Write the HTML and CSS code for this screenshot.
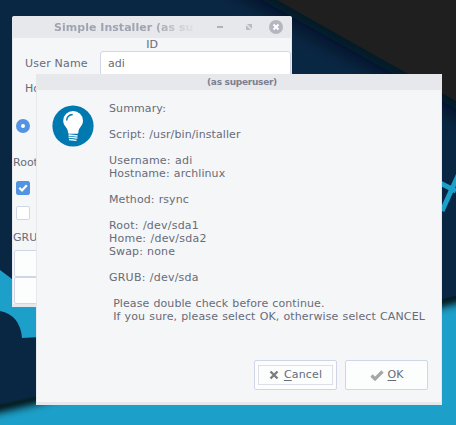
FILE: index.html
```html
<!DOCTYPE html>
<html lang="en">
<head>
<meta charset="utf-8">
<title>Simple Installer</title>
<link rel="stylesheet" href="styles.css">
</head>
<body>
<svg class="wallpaper" viewBox="0 0 456 425" aria-hidden="true">
  <defs>
    <filter id="soft" filterUnits="userSpaceOnUse" x="150" y="-80" width="400" height="300"><feGaussianBlur stdDeviation="10"/></filter>
    <filter id="soft2" filterUnits="userSpaceOnUse" x="-60" y="240" width="600" height="240"><feGaussianBlur stdDeviation="4"/></filter>
  </defs>
  <rect width="456" height="425" fill="#092643"/>
  <path d="M223-30 483 116" stroke="#000b16" stroke-width="16" filter="url(#soft)"/>
  <path d="M277 0H456V101Z" fill="#1f1f1f"/>
  <path d="M0 270 12 279 60 315V389L442 300 456 296V425H0Z" fill="#1c9fc8"/>
  <path d="M-30 413 36 398 60 391 442 301 490 288" stroke="#000" stroke-width="11" fill="none" filter="url(#soft2)"/>
  <path d="M0 311Q20 315 22 338L60 336V390L36 396 0 404Z" fill="#092643"/>
  <path d="M430 260H456V296L430 303Z" fill="#092643"/>
  <path d="M436 181 456 191M442 211 461 169" stroke="#1c9fc8" stroke-width="5" fill="none"/>
</svg>
<main class="window">
  <header class="titlebar">
    <span class="title">Simple Installer (as su</span>
    <svg class="controls" viewBox="0 0 76 22" aria-hidden="true">
      <path d="M5 11h6" stroke="#b0b3bc" stroke-width="2"/>
      <path d="M35 8h5v5zM34 9v5h5z" fill="#b8bbc3"/>
      <circle cx="64" cy="11" r="7" fill="#b4b7c0"/>
      <path d="m61.500 8.500 5 5m0-5-5 5" stroke="#fff" stroke-width="2"/>
    </svg>
  </header>
  <div class="id">ID</div>
  <div class="field"><label>User Name</label><span class="input">adi</span></div>
  <div class="host">Hostname</div>
  <span class="radio"></span>
  <div class="root">Root</div>
  <svg class="check on" viewBox="0 0 14 14"><rect width="14" height="14" rx="1.500" fill="#5294e2"/><path d="m3.300 6.800 2.700 2.700 4.800-5.200" fill="none" stroke="#fff" stroke-width="2.200"/></svg>
  <span class="check"></span>
  <div class="grub">GRUB</div>
  <div class="box"></div><div class="box"></div>
</main>
<section class="dialog">
  <header>(as superuser)</header>
  <div class="content">
    <svg class="bulb" viewBox="0 0 42 42" aria-hidden="true">
      <circle cx="21" cy="21" r="20.600" fill="#0079b0"/>
      <path d="M16 27.500C16 22.500 11.200 21 11.200 15.700a9.900 9.700 0 0 1 19.800 0c0 5.300-4.600 6.800-4.600 11.800q0 1.300-1.400 1.300h-7.600q-1.400 0-1.400-1.300z" fill="#fff"/>
      <path d="M14.700 15.500c.2-3.500 2.500-5.600 6-5.900" fill="none" stroke="#0079b0" stroke-width="1.500"/>
      <path d="m16.500 30 9 1m-9 1.200 9 1m-8.500 1.300 7.500 .8" stroke="#fff" stroke-width="1.300"/>
    </svg>
    <div class="text">Summary:

<span class="tight">Script: /usr/bin/installer</span>

<span class="wide">Username: adi</span>
<span class="tight">Hostname: archlinux</span>

<span class="tight">Method: rsync</span>

<span class="wide">Root: /dev/sda1</span>
<span class="wide">Home: /dev/sda2</span>
Swap: none

<span class="wide">GRUB: /dev/sda</span>

 <span class="tight">Please double check before continue.</span>
 <span>If you sure, please select OK, otherwise select CANCEL</span></div>
  </div>
  <footer>
    <button class="focused"><span class="inner"><svg width="10" height="10" viewBox="0 0 10 10"><path d="m1.500 1.500 7 7m0-7-7 7" stroke="#7b7c7f" stroke-width="2.400"/></svg><span class="caption"><u>C</u>ancel</span></span></button>
    <button><svg width="14" height="11" viewBox="0 0 14 11"><path d="m1.500 5.500 3.500 3.500 7.500-7.500" fill="none" stroke="#a6a6a6" stroke-width="3.200"/></svg><span class="caption"><u>O</u>K</span></button>
  </footer>
</section>
</body>
</html>
```
FILE: styles.css
```css
* { box-sizing: border-box; }
body {
  margin: 0;
  width: 456px;
  height: 425px;
  overflow: hidden;
  position: relative;
  font: 11px/13px "DejaVu Sans", sans-serif;
  color: #686b78;
}
svg { display: block; }
.wallpaper { width: 456px; height: 425px; }
.window {
  position: absolute;
  left: 12px;
  top: 16px;
  width: 280px;
  height: 291px;
  overflow: hidden;
  background: #f4f6f8;
  border: 1px solid #e7e8eb;
  border-bottom-width: 3px;
  border-radius: 2px 2px 0 0;
}
.titlebar {
  display: flex;
  justify-content: space-between;
  align-items: center;
  height: 21px;
  padding: 0 3px 0 41px;
  background: #e7e8eb;
}
.title {
  width: 139px;
  overflow: hidden;
  white-space: nowrap;
  font-weight: bold;
  letter-spacing: 0.03px;
  color: #a0a4b2;
  -webkit-mask-image: linear-gradient(90deg, #000 100px, transparent 143px);
  mask-image: linear-gradient(90deg, #000 100px, transparent 143px);
}
.controls { width: 76px; height: 22px; margin-bottom: 1px; }
.id { height: 13px; text-align: center; }
.field { display: flex; height: 25px; padding-left: 12px; }
.field label { width: 75px; padding-top: 6px; letter-spacing: 0.2px; }
.input {
  width: 191px;
  padding: 5px 7px;
  background: #fff;
  border: 1px solid #cfd6e6;
  border-radius: 3px;
}
.host { margin: 6px 0 0 12px; height: 13px; }
.radio {
  display: block;
  width: 14px;
  height: 14px;
  margin: 24px 0 0 3px;
  border: 5px solid #5294e2;
  border-radius: 50%;
  background: #fff;
}
.root { margin-top: 23px; }
.check { display: block; width: 14px; height: 14px; margin: 11px 0 0 3px; background: #fff; border: 1px solid #cfd6e6; border-radius: 2px; }
.check.on { margin-top: 12px; border: 0; background: none; }
.grub { margin: 11px 0 6px; }
.box { height: 27px; margin-left: 1px; background: #fcfdfd; border: 1px solid #cfd6e6; border-radius: 2px; }
.dialog {
  position: absolute;
  left: 36px;
  top: 74px;
  width: 406px;
  height: 331px;
  display: flex;
  flex-direction: column;
  background: #f4f6f8;
  border: 1px solid #e7e8eb;
  border-bottom-width: 3px;
}
.dialog header {
  height: 15px;
  padding-left: 6px;
  line-height: 15px;
  text-align: center;
  font-size: 9px;
  font-weight: bold;
  letter-spacing: -0.28px;
  color: #7b8092;
  background: #e7e8eb;
}
.content { display: flex; padding: 12px 0 0 15px; }
.bulb { width: 42px; height: 42px; margin: 3px 15px 0 0; }
.text { white-space: pre; letter-spacing: 0.12px; word-spacing: 0.5px; }
.text .tight { letter-spacing: 0.09px; }
.text .wide { letter-spacing: 0.22px; }
.dialog footer { display: flex; gap: 8px; margin: auto 13px 12px auto; }
button {
  width: 83px;
  height: 30px;
  padding: 0;
  display: flex;
  align-items: center;
  justify-content: center;
  gap: 4px;
  font: inherit;
  color: inherit;
  background: #fcfdfd;
  border: 1px solid #cfd6e6;
  border-radius: 2px;
}
.inner {
  width: 75px;
  height: 20px;
  display: flex;
  align-items: center;
  justify-content: center;
  gap: 5px;
  letter-spacing: 0.15px;
  border: 1px solid #dcdfea;
}
.caption { padding-bottom: 2px; }
u { text-underline-offset: 2px; text-decoration-skip-ink: none; }
```
